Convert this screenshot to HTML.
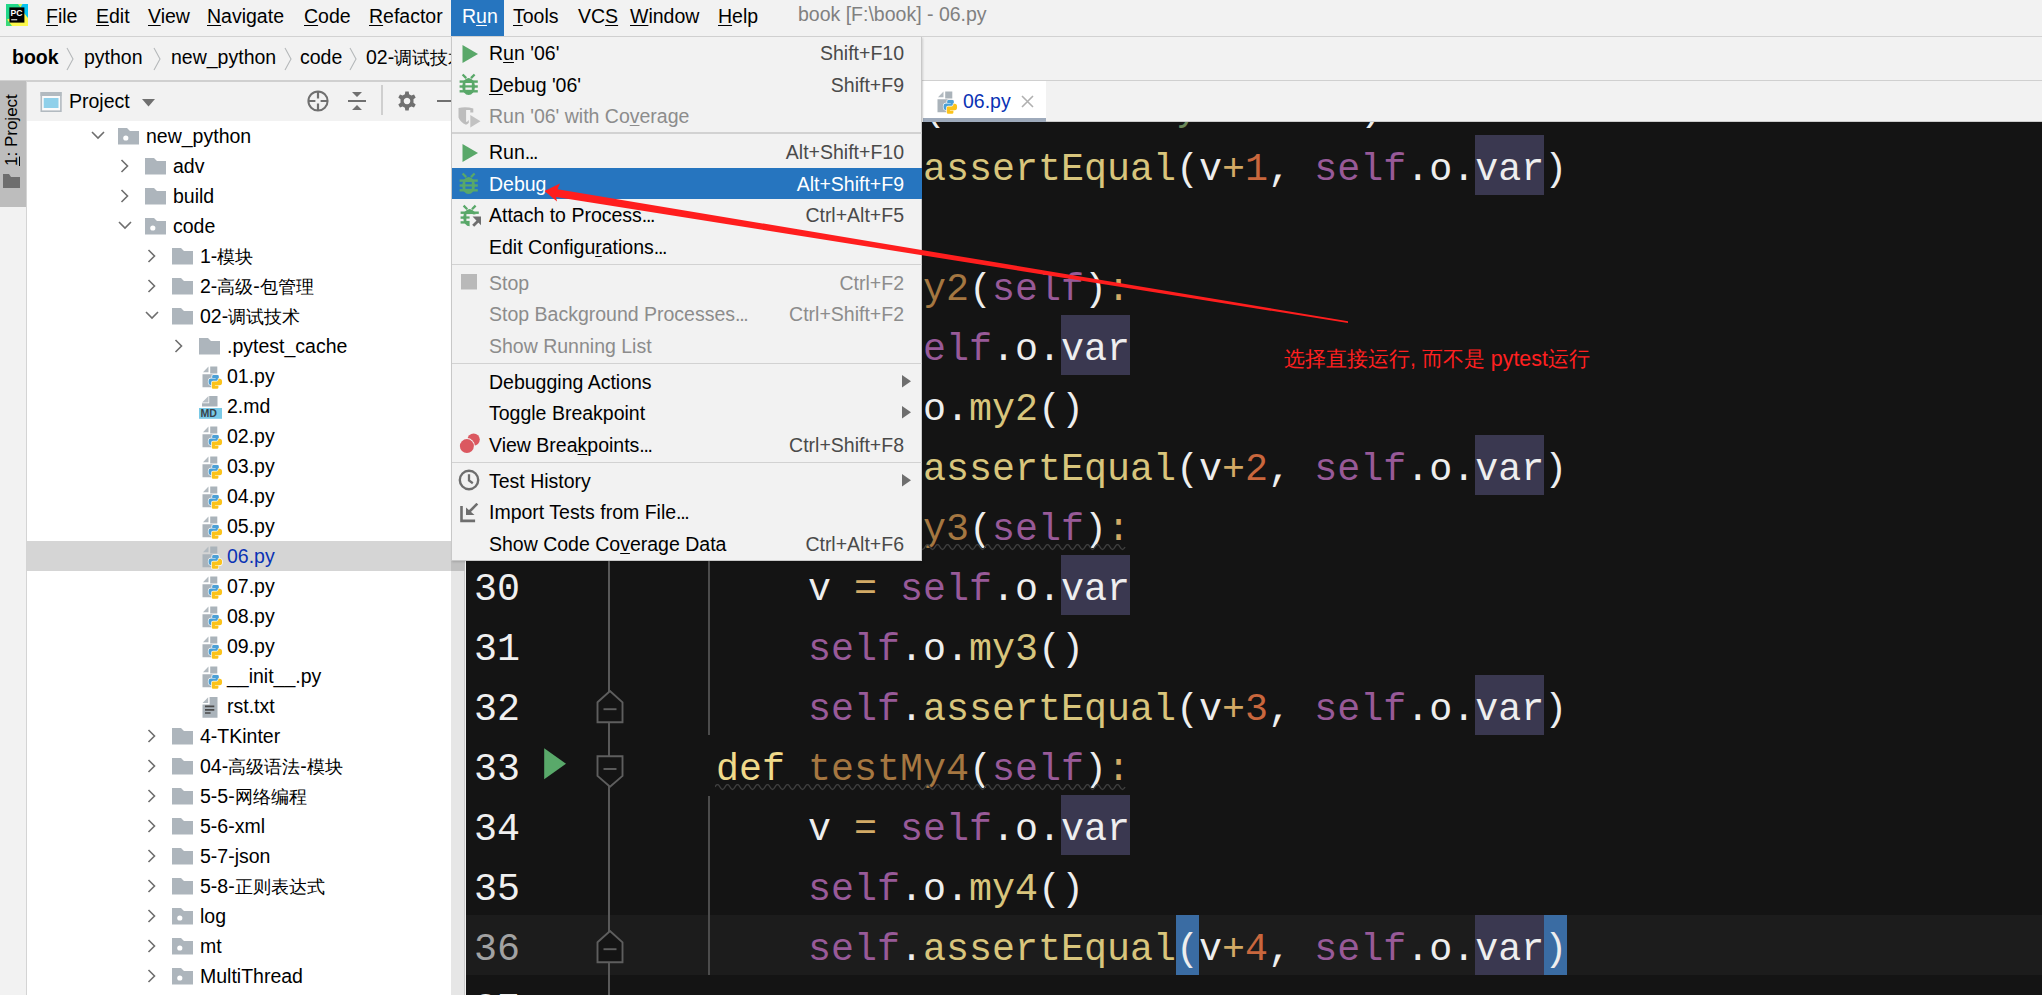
<!DOCTYPE html><html><head><meta charset="utf-8"><style>html,body{margin:0;padding:0}body{width:2042px;height:995px;overflow:hidden;position:relative;background:#f2f2f2}u{text-decoration-thickness:1px;text-underline-offset:1.5px}</style></head><body>
<div style="position:absolute;left:0px;top:0px;width:2042px;height:36px;background:#f2f2f2;"></div>
<div style="position:absolute;left:0px;top:36px;width:2042px;height:1px;background:#d2d2d2;"></div>
<svg style="position:absolute;left:6px;top:4px;" width="22" height="22" viewBox="0 0 22 22"><rect width="22" height="22" fill="#21d789"/><path d="M14,0 H22 V19 L18,13 Z" fill="#07c3f2"/><path d="M12,0 H16.5 L14.5,3.5 Z" fill="#c8f060"/><path d="M0,16 L4,22 H22 V14 L18,9 Z" fill="#fcf84a"/><path d="M0,14 L6,22 H0 Z" fill="#3bd97a"/><rect x="3.4" y="3.4" width="15" height="15.2" fill="#000"/><text x="4.6" y="11.6" font-family="Liberation Sans" font-weight="bold" font-size="8.6" fill="#fff">PC</text><rect x="5.2" y="15" width="6" height="1.4" fill="#bbb"/></svg>
<div style="position:absolute;left:451px;top:0px;width:53px;height:36px;background:#2675bf;"></div>
<div style="position:absolute;left:46px;top:5.85px;font:normal 19.5px 'Liberation Sans', sans-serif;line-height:21.78px;color:#000;white-space:pre;"><u>F</u>ile</div>
<div style="position:absolute;left:96px;top:5.85px;font:normal 19.5px 'Liberation Sans', sans-serif;line-height:21.78px;color:#000;white-space:pre;"><u>E</u>dit</div>
<div style="position:absolute;left:148px;top:5.85px;font:normal 19.5px 'Liberation Sans', sans-serif;line-height:21.78px;color:#000;white-space:pre;"><u>V</u>iew</div>
<div style="position:absolute;left:207px;top:5.85px;font:normal 19.5px 'Liberation Sans', sans-serif;line-height:21.78px;color:#000;white-space:pre;"><u>N</u>avigate</div>
<div style="position:absolute;left:304px;top:5.85px;font:normal 19.5px 'Liberation Sans', sans-serif;line-height:21.78px;color:#000;white-space:pre;"><u>C</u>ode</div>
<div style="position:absolute;left:369px;top:5.85px;font:normal 19.5px 'Liberation Sans', sans-serif;line-height:21.78px;color:#000;white-space:pre;"><u>R</u>efactor</div>
<div style="position:absolute;left:462px;top:5.85px;font:normal 19.5px 'Liberation Sans', sans-serif;line-height:21.78px;color:#fff;white-space:pre;">R<u>u</u>n</div>
<div style="position:absolute;left:513px;top:5.85px;font:normal 19.5px 'Liberation Sans', sans-serif;line-height:21.78px;color:#000;white-space:pre;"><u>T</u>ools</div>
<div style="position:absolute;left:578px;top:5.85px;font:normal 19.5px 'Liberation Sans', sans-serif;line-height:21.78px;color:#000;white-space:pre;">VC<u>S</u></div>
<div style="position:absolute;left:630px;top:5.85px;font:normal 19.5px 'Liberation Sans', sans-serif;line-height:21.78px;color:#000;white-space:pre;"><u>W</u>indow</div>
<div style="position:absolute;left:718px;top:5.85px;font:normal 19.5px 'Liberation Sans', sans-serif;line-height:21.78px;color:#000;white-space:pre;"><u>H</u>elp</div>
<div style="position:absolute;left:798px;top:4.35px;font:normal 19.5px 'Liberation Sans', sans-serif;line-height:21.78px;color:#808080;white-space:pre;">book [F:\book] - 06.py</div>
<div style="position:absolute;left:0px;top:37px;width:2042px;height:43px;background:#f2f2f2;"></div>
<div style="position:absolute;left:0px;top:80px;width:2042px;height:1px;background:#d0d0d0;"></div>
<div style="position:absolute;left:12px;top:47.35px;font:bold 19.5px 'Liberation Sans', sans-serif;line-height:21.78px;color:#000;white-space:pre;">book</div>
<svg style="position:absolute;left:66px;top:47px;" width="8" height="24" viewBox="0 0 8 24"><path d="M1,1 L7,12 L1,23" fill="none" stroke="#b5b8ba" stroke-width="1.1"/></svg>
<svg style="position:absolute;left:153px;top:47px;" width="8" height="24" viewBox="0 0 8 24"><path d="M1,1 L7,12 L1,23" fill="none" stroke="#b5b8ba" stroke-width="1.1"/></svg>
<svg style="position:absolute;left:284px;top:47px;" width="8" height="24" viewBox="0 0 8 24"><path d="M1,1 L7,12 L1,23" fill="none" stroke="#b5b8ba" stroke-width="1.1"/></svg>
<svg style="position:absolute;left:349px;top:47px;" width="8" height="24" viewBox="0 0 8 24"><path d="M1,1 L7,12 L1,23" fill="none" stroke="#b5b8ba" stroke-width="1.1"/></svg>
<div style="position:absolute;left:84px;top:47.35px;font:normal 19.5px 'Liberation Sans', sans-serif;line-height:21.78px;color:#000;white-space:pre;">python</div>
<div style="position:absolute;left:171px;top:47.35px;font:normal 19.5px 'Liberation Sans', sans-serif;line-height:21.78px;color:#000;white-space:pre;">new_python</div>
<div style="position:absolute;left:300px;top:47.35px;font:normal 19.5px 'Liberation Sans', sans-serif;line-height:21.78px;color:#000;white-space:pre;">code</div>
<div style="position:absolute;left:366px;top:47.35px;font:normal 19.5px 'Liberation Sans', sans-serif;line-height:21.78px;color:#000;white-space:pre;">02-<span style="font-size:17.6px">调试技术</span></div>
<div style="position:absolute;left:0px;top:81px;width:26px;height:914px;background:#f2f2f2;"></div>
<div style="position:absolute;left:0px;top:81px;width:26px;height:126px;background:#bdbdbd;"></div>
<div style="position:absolute;left:26px;top:81px;width:1px;height:914px;background:#d4d4d4;"></div>
<div style="position:absolute;left:2px;top:166px;transform:rotate(-90deg);transform-origin:0 0;font:17px 'Liberation Sans', sans-serif;line-height:20px;color:#000;white-space:pre"><u>1</u>: Project</div>
<svg style="position:absolute;left:3px;top:174px;" width="17" height="14" viewBox="0 0 17 14"><path d="M0,0 H6 L8,3 H17 V14 H0 Z" fill="#6e6e6e"/></svg>
<div style="position:absolute;left:27px;top:81px;width:424px;height:40px;background:#f2f2f2;"></div>
<div style="position:absolute;left:27px;top:81px;width:424px;height:1px;background:#d0d0d0;"></div>
<div style="position:absolute;left:27px;top:121px;width:424px;height:874px;background:#ffffff;"></div>
<svg style="position:absolute;left:40px;top:92px;" width="22" height="20" viewBox="0 0 22 20"><rect x="1.3" y="0.8" width="19.6" height="18.4" fill="#fbfbfb" stroke="#b2bac0" stroke-width="1.6"/><rect x="0.5" y="0" width="21" height="4" fill="#b2bac0"/><rect x="3.7" y="6" width="14.8" height="10" fill="#8fd0ea"/></svg>
<div style="position:absolute;left:69px;top:91.35px;font:normal 19.5px 'Liberation Sans', sans-serif;line-height:21.78px;color:#000;white-space:pre;">Project</div>
<svg style="position:absolute;left:142px;top:99px;" width="14" height="8" viewBox="0 0 14 8"><path d="M0,0 H13 L6.5,7.5 Z" fill="#707070"/></svg>
<svg style="position:absolute;left:307px;top:90px;" width="22" height="22" viewBox="0 0 22 22"><circle cx="11" cy="11" r="9.6" fill="none" stroke="#707070" stroke-width="2"/><path d="M11,1.5 V8.4 M11,13.6 V20.5 M1.5,11 H8.4 M13.6,11 H20.5" stroke="#707070" stroke-width="2.2"/></svg>
<svg style="position:absolute;left:348px;top:91px;" width="20" height="20" viewBox="0 0 20 20"><path d="M4,1 H14 L9,6 Z M4,19 H14 L9,14 Z" fill="#707070"/><rect x="0" y="9" width="18" height="2" fill="#707070"/></svg>
<div style="position:absolute;left:381px;top:85px;width:1.5px;height:30px;background:#cfcfcf;"></div>
<svg style="position:absolute;left:397px;top:91px;" width="20" height="20" viewBox="0 0 20 20"><g transform="translate(10,10)"><path fill="#707070" fill-rule="evenodd" d="M-1.7,-9.5 H1.7 L2.1,-6.7 L4.4,-5.4 L7,-6.4 L8.7,-3.5 L6.5,-1.7 V1.7 L8.7,3.5 L7,6.4 L4.4,5.4 L2.1,6.7 L1.7,9.5 H-1.7 L-2.1,6.7 L-4.4,5.4 L-7,6.4 L-8.7,3.5 L-6.5,1.7 V-1.7 L-8.7,-3.5 L-7,-6.4 L-4.4,-5.4 L-2.1,-6.7 Z M0,-3.3 A3.3,3.3 0 1 0 0.01,-3.3 Z"/></g></svg>
<div style="position:absolute;left:437px;top:100px;width:14px;height:2.2px;background:#707070;"></div>
<div style="position:absolute;left:450.5px;top:81px;width:1px;height:914px;background:#d6d6d6;"></div>
<div style="position:absolute;left:27px;top:541px;width:424px;height:30px;background:#d5d5d5;"></div>
<svg style="position:absolute;left:91px;top:131px;" width="15" height="9" viewBox="0 0 15 9"><path d="M1,1 L7,7 L13,1" fill="none" stroke="#6e6e6e" stroke-width="1.6"/></svg>
<svg style="position:absolute;left:118px;top:128px;" width="21" height="17" viewBox="0 0 21 17"><path d="M0,0 H9 L12,3 H21 V16.5 H0 Z" fill="#adb5bc"/><circle cx="7.8" cy="10" r="2.6" fill="#fff"/></svg>
<div style="position:absolute;left:146px;top:126.35px;font:normal 19.5px 'Liberation Sans', sans-serif;line-height:21.78px;color:#000;white-space:pre;">new_python</div>
<svg style="position:absolute;left:120px;top:159px;" width="10" height="15" viewBox="0 0 10 15"><path d="M1.5,1 L7.5,7 L1.5,13" fill="none" stroke="#6e6e6e" stroke-width="1.6"/></svg>
<svg style="position:absolute;left:145px;top:158px;" width="21" height="17" viewBox="0 0 21 17"><path d="M0,0 H9 L12,3 H21 V16.5 H0 Z" fill="#adb5bc"/></svg>
<div style="position:absolute;left:173px;top:156.35px;font:normal 19.5px 'Liberation Sans', sans-serif;line-height:21.78px;color:#000;white-space:pre;">adv</div>
<svg style="position:absolute;left:120px;top:189px;" width="10" height="15" viewBox="0 0 10 15"><path d="M1.5,1 L7.5,7 L1.5,13" fill="none" stroke="#6e6e6e" stroke-width="1.6"/></svg>
<svg style="position:absolute;left:145px;top:188px;" width="21" height="17" viewBox="0 0 21 17"><path d="M0,0 H9 L12,3 H21 V16.5 H0 Z" fill="#adb5bc"/></svg>
<div style="position:absolute;left:173px;top:186.35px;font:normal 19.5px 'Liberation Sans', sans-serif;line-height:21.78px;color:#000;white-space:pre;">build</div>
<svg style="position:absolute;left:118px;top:221px;" width="15" height="9" viewBox="0 0 15 9"><path d="M1,1 L7,7 L13,1" fill="none" stroke="#6e6e6e" stroke-width="1.6"/></svg>
<svg style="position:absolute;left:145px;top:218px;" width="21" height="17" viewBox="0 0 21 17"><path d="M0,0 H9 L12,3 H21 V16.5 H0 Z" fill="#adb5bc"/><circle cx="7.8" cy="10" r="2.6" fill="#fff"/></svg>
<div style="position:absolute;left:173px;top:216.35px;font:normal 19.5px 'Liberation Sans', sans-serif;line-height:21.78px;color:#000;white-space:pre;">code</div>
<svg style="position:absolute;left:147px;top:249px;" width="10" height="15" viewBox="0 0 10 15"><path d="M1.5,1 L7.5,7 L1.5,13" fill="none" stroke="#6e6e6e" stroke-width="1.6"/></svg>
<svg style="position:absolute;left:172px;top:248px;" width="21" height="17" viewBox="0 0 21 17"><path d="M0,0 H9 L12,3 H21 V16.5 H0 Z" fill="#adb5bc"/></svg>
<div style="position:absolute;left:200px;top:246.35px;font:normal 19.5px 'Liberation Sans', sans-serif;line-height:21.78px;color:#000;white-space:pre;">1-<span style="font-size:17.6px">模块</span></div>
<svg style="position:absolute;left:147px;top:279px;" width="10" height="15" viewBox="0 0 10 15"><path d="M1.5,1 L7.5,7 L1.5,13" fill="none" stroke="#6e6e6e" stroke-width="1.6"/></svg>
<svg style="position:absolute;left:172px;top:278px;" width="21" height="17" viewBox="0 0 21 17"><path d="M0,0 H9 L12,3 H21 V16.5 H0 Z" fill="#adb5bc"/></svg>
<div style="position:absolute;left:200px;top:276.35px;font:normal 19.5px 'Liberation Sans', sans-serif;line-height:21.78px;color:#000;white-space:pre;">2-<span style="font-size:17.6px">高级</span>-<span style="font-size:17.6px">包管理</span></div>
<svg style="position:absolute;left:145px;top:311px;" width="15" height="9" viewBox="0 0 15 9"><path d="M1,1 L7,7 L13,1" fill="none" stroke="#6e6e6e" stroke-width="1.6"/></svg>
<svg style="position:absolute;left:172px;top:308px;" width="21" height="17" viewBox="0 0 21 17"><path d="M0,0 H9 L12,3 H21 V16.5 H0 Z" fill="#adb5bc"/></svg>
<div style="position:absolute;left:200px;top:306.35px;font:normal 19.5px 'Liberation Sans', sans-serif;line-height:21.78px;color:#000;white-space:pre;">02-<span style="font-size:17.6px">调试技术</span></div>
<svg style="position:absolute;left:174px;top:339px;" width="10" height="15" viewBox="0 0 10 15"><path d="M1.5,1 L7.5,7 L1.5,13" fill="none" stroke="#6e6e6e" stroke-width="1.6"/></svg>
<svg style="position:absolute;left:199px;top:338px;" width="21" height="17" viewBox="0 0 21 17"><path d="M0,0 H9 L12,3 H21 V16.5 H0 Z" fill="#adb5bc"/></svg>
<div style="position:absolute;left:227px;top:336.35px;font:normal 19.5px 'Liberation Sans', sans-serif;line-height:21.78px;color:#000;white-space:pre;">.pytest_cache</div>
<svg style="position:absolute;left:202px;top:365px;" width="22" height="25" viewBox="0 0 22 25"><path d="M1,7.2 L6.5,1.5 V7.2 Z" fill="#b3bbc1"/><path d="M8.2,1.5 H15.3 V8.6 H8.2 Z M0.5,9.2 H15.3 V22.3 H0.5 Z" fill="#aab3ba"/><g transform="translate(6.5,10)" stroke="#fff" stroke-width="1.3" paint-order="stroke" stroke-linejoin="round"><path d="M3.7,1.2 Q3.7,0 5,0 H9 Q10.3,0 10.3,1.2 V6.1 Q10.3,7.3 9.1,7.3 H5.6 Q3.7,7.3 3.7,9.1 V10 H2.4 Q0,10 0,6.8 Q0,3.5 2.4,3.5 H7.2 V3 H3.7 Z" fill="#4a9fd5"/><path transform="rotate(180 6.8 6.9)" d="M3.7,1.2 Q3.7,0 5,0 H9 Q10.3,0 10.3,1.2 V6.1 Q10.3,7.3 9.1,7.3 H5.6 Q3.7,7.3 3.7,9.1 V10 H2.4 Q0,10 0,6.8 Q0,3.5 2.4,3.5 H7.2 V3 H3.7 Z" fill="#fbc31b"/></g></svg>
<div style="position:absolute;left:227px;top:366.35px;font:normal 19.5px 'Liberation Sans', sans-serif;line-height:21.78px;color:#000;white-space:pre;">01.py</div>
<svg style="position:absolute;left:199px;top:396px;" width="23" height="24" viewBox="0 0 23 24"><path d="M3,6.5 L9.5,0 V6.5 Z" fill="#b9c0c6"/><path d="M10.2,0 H18.5 V10.5 H3 V7.2 H10.2 Z" fill="#a9b2b9"/><rect x="0" y="12" width="23" height="10.8" fill="#79c9e6"/><text x="1.5" y="21.4" font-family="Liberation Sans" font-weight="bold" font-size="10.6" fill="#35424a">MD</text></svg>
<div style="position:absolute;left:227px;top:396.35px;font:normal 19.5px 'Liberation Sans', sans-serif;line-height:21.78px;color:#000;white-space:pre;">2.md</div>
<svg style="position:absolute;left:202px;top:425px;" width="22" height="25" viewBox="0 0 22 25"><path d="M1,7.2 L6.5,1.5 V7.2 Z" fill="#b3bbc1"/><path d="M8.2,1.5 H15.3 V8.6 H8.2 Z M0.5,9.2 H15.3 V22.3 H0.5 Z" fill="#aab3ba"/><g transform="translate(6.5,10)" stroke="#fff" stroke-width="1.3" paint-order="stroke" stroke-linejoin="round"><path d="M3.7,1.2 Q3.7,0 5,0 H9 Q10.3,0 10.3,1.2 V6.1 Q10.3,7.3 9.1,7.3 H5.6 Q3.7,7.3 3.7,9.1 V10 H2.4 Q0,10 0,6.8 Q0,3.5 2.4,3.5 H7.2 V3 H3.7 Z" fill="#4a9fd5"/><path transform="rotate(180 6.8 6.9)" d="M3.7,1.2 Q3.7,0 5,0 H9 Q10.3,0 10.3,1.2 V6.1 Q10.3,7.3 9.1,7.3 H5.6 Q3.7,7.3 3.7,9.1 V10 H2.4 Q0,10 0,6.8 Q0,3.5 2.4,3.5 H7.2 V3 H3.7 Z" fill="#fbc31b"/></g></svg>
<div style="position:absolute;left:227px;top:426.35px;font:normal 19.5px 'Liberation Sans', sans-serif;line-height:21.78px;color:#000;white-space:pre;">02.py</div>
<svg style="position:absolute;left:202px;top:455px;" width="22" height="25" viewBox="0 0 22 25"><path d="M1,7.2 L6.5,1.5 V7.2 Z" fill="#b3bbc1"/><path d="M8.2,1.5 H15.3 V8.6 H8.2 Z M0.5,9.2 H15.3 V22.3 H0.5 Z" fill="#aab3ba"/><g transform="translate(6.5,10)" stroke="#fff" stroke-width="1.3" paint-order="stroke" stroke-linejoin="round"><path d="M3.7,1.2 Q3.7,0 5,0 H9 Q10.3,0 10.3,1.2 V6.1 Q10.3,7.3 9.1,7.3 H5.6 Q3.7,7.3 3.7,9.1 V10 H2.4 Q0,10 0,6.8 Q0,3.5 2.4,3.5 H7.2 V3 H3.7 Z" fill="#4a9fd5"/><path transform="rotate(180 6.8 6.9)" d="M3.7,1.2 Q3.7,0 5,0 H9 Q10.3,0 10.3,1.2 V6.1 Q10.3,7.3 9.1,7.3 H5.6 Q3.7,7.3 3.7,9.1 V10 H2.4 Q0,10 0,6.8 Q0,3.5 2.4,3.5 H7.2 V3 H3.7 Z" fill="#fbc31b"/></g></svg>
<div style="position:absolute;left:227px;top:456.35px;font:normal 19.5px 'Liberation Sans', sans-serif;line-height:21.78px;color:#000;white-space:pre;">03.py</div>
<svg style="position:absolute;left:202px;top:485px;" width="22" height="25" viewBox="0 0 22 25"><path d="M1,7.2 L6.5,1.5 V7.2 Z" fill="#b3bbc1"/><path d="M8.2,1.5 H15.3 V8.6 H8.2 Z M0.5,9.2 H15.3 V22.3 H0.5 Z" fill="#aab3ba"/><g transform="translate(6.5,10)" stroke="#fff" stroke-width="1.3" paint-order="stroke" stroke-linejoin="round"><path d="M3.7,1.2 Q3.7,0 5,0 H9 Q10.3,0 10.3,1.2 V6.1 Q10.3,7.3 9.1,7.3 H5.6 Q3.7,7.3 3.7,9.1 V10 H2.4 Q0,10 0,6.8 Q0,3.5 2.4,3.5 H7.2 V3 H3.7 Z" fill="#4a9fd5"/><path transform="rotate(180 6.8 6.9)" d="M3.7,1.2 Q3.7,0 5,0 H9 Q10.3,0 10.3,1.2 V6.1 Q10.3,7.3 9.1,7.3 H5.6 Q3.7,7.3 3.7,9.1 V10 H2.4 Q0,10 0,6.8 Q0,3.5 2.4,3.5 H7.2 V3 H3.7 Z" fill="#fbc31b"/></g></svg>
<div style="position:absolute;left:227px;top:486.35px;font:normal 19.5px 'Liberation Sans', sans-serif;line-height:21.78px;color:#000;white-space:pre;">04.py</div>
<svg style="position:absolute;left:202px;top:515px;" width="22" height="25" viewBox="0 0 22 25"><path d="M1,7.2 L6.5,1.5 V7.2 Z" fill="#b3bbc1"/><path d="M8.2,1.5 H15.3 V8.6 H8.2 Z M0.5,9.2 H15.3 V22.3 H0.5 Z" fill="#aab3ba"/><g transform="translate(6.5,10)" stroke="#fff" stroke-width="1.3" paint-order="stroke" stroke-linejoin="round"><path d="M3.7,1.2 Q3.7,0 5,0 H9 Q10.3,0 10.3,1.2 V6.1 Q10.3,7.3 9.1,7.3 H5.6 Q3.7,7.3 3.7,9.1 V10 H2.4 Q0,10 0,6.8 Q0,3.5 2.4,3.5 H7.2 V3 H3.7 Z" fill="#4a9fd5"/><path transform="rotate(180 6.8 6.9)" d="M3.7,1.2 Q3.7,0 5,0 H9 Q10.3,0 10.3,1.2 V6.1 Q10.3,7.3 9.1,7.3 H5.6 Q3.7,7.3 3.7,9.1 V10 H2.4 Q0,10 0,6.8 Q0,3.5 2.4,3.5 H7.2 V3 H3.7 Z" fill="#fbc31b"/></g></svg>
<div style="position:absolute;left:227px;top:516.35px;font:normal 19.5px 'Liberation Sans', sans-serif;line-height:21.78px;color:#000;white-space:pre;">05.py</div>
<svg style="position:absolute;left:202px;top:545px;" width="22" height="25" viewBox="0 0 22 25"><path d="M1,7.2 L6.5,1.5 V7.2 Z" fill="#b3bbc1"/><path d="M8.2,1.5 H15.3 V8.6 H8.2 Z M0.5,9.2 H15.3 V22.3 H0.5 Z" fill="#aab3ba"/><g transform="translate(6.5,10)" stroke="#fff" stroke-width="1.3" paint-order="stroke" stroke-linejoin="round"><path d="M3.7,1.2 Q3.7,0 5,0 H9 Q10.3,0 10.3,1.2 V6.1 Q10.3,7.3 9.1,7.3 H5.6 Q3.7,7.3 3.7,9.1 V10 H2.4 Q0,10 0,6.8 Q0,3.5 2.4,3.5 H7.2 V3 H3.7 Z" fill="#4a9fd5"/><path transform="rotate(180 6.8 6.9)" d="M3.7,1.2 Q3.7,0 5,0 H9 Q10.3,0 10.3,1.2 V6.1 Q10.3,7.3 9.1,7.3 H5.6 Q3.7,7.3 3.7,9.1 V10 H2.4 Q0,10 0,6.8 Q0,3.5 2.4,3.5 H7.2 V3 H3.7 Z" fill="#fbc31b"/></g></svg>
<div style="position:absolute;left:227px;top:546.35px;font:normal 19.5px 'Liberation Sans', sans-serif;line-height:21.78px;color:#0a32b4;white-space:pre;">06.py</div>
<svg style="position:absolute;left:202px;top:575px;" width="22" height="25" viewBox="0 0 22 25"><path d="M1,7.2 L6.5,1.5 V7.2 Z" fill="#b3bbc1"/><path d="M8.2,1.5 H15.3 V8.6 H8.2 Z M0.5,9.2 H15.3 V22.3 H0.5 Z" fill="#aab3ba"/><g transform="translate(6.5,10)" stroke="#fff" stroke-width="1.3" paint-order="stroke" stroke-linejoin="round"><path d="M3.7,1.2 Q3.7,0 5,0 H9 Q10.3,0 10.3,1.2 V6.1 Q10.3,7.3 9.1,7.3 H5.6 Q3.7,7.3 3.7,9.1 V10 H2.4 Q0,10 0,6.8 Q0,3.5 2.4,3.5 H7.2 V3 H3.7 Z" fill="#4a9fd5"/><path transform="rotate(180 6.8 6.9)" d="M3.7,1.2 Q3.7,0 5,0 H9 Q10.3,0 10.3,1.2 V6.1 Q10.3,7.3 9.1,7.3 H5.6 Q3.7,7.3 3.7,9.1 V10 H2.4 Q0,10 0,6.8 Q0,3.5 2.4,3.5 H7.2 V3 H3.7 Z" fill="#fbc31b"/></g></svg>
<div style="position:absolute;left:227px;top:576.35px;font:normal 19.5px 'Liberation Sans', sans-serif;line-height:21.78px;color:#000;white-space:pre;">07.py</div>
<svg style="position:absolute;left:202px;top:605px;" width="22" height="25" viewBox="0 0 22 25"><path d="M1,7.2 L6.5,1.5 V7.2 Z" fill="#b3bbc1"/><path d="M8.2,1.5 H15.3 V8.6 H8.2 Z M0.5,9.2 H15.3 V22.3 H0.5 Z" fill="#aab3ba"/><g transform="translate(6.5,10)" stroke="#fff" stroke-width="1.3" paint-order="stroke" stroke-linejoin="round"><path d="M3.7,1.2 Q3.7,0 5,0 H9 Q10.3,0 10.3,1.2 V6.1 Q10.3,7.3 9.1,7.3 H5.6 Q3.7,7.3 3.7,9.1 V10 H2.4 Q0,10 0,6.8 Q0,3.5 2.4,3.5 H7.2 V3 H3.7 Z" fill="#4a9fd5"/><path transform="rotate(180 6.8 6.9)" d="M3.7,1.2 Q3.7,0 5,0 H9 Q10.3,0 10.3,1.2 V6.1 Q10.3,7.3 9.1,7.3 H5.6 Q3.7,7.3 3.7,9.1 V10 H2.4 Q0,10 0,6.8 Q0,3.5 2.4,3.5 H7.2 V3 H3.7 Z" fill="#fbc31b"/></g></svg>
<div style="position:absolute;left:227px;top:606.35px;font:normal 19.5px 'Liberation Sans', sans-serif;line-height:21.78px;color:#000;white-space:pre;">08.py</div>
<svg style="position:absolute;left:202px;top:635px;" width="22" height="25" viewBox="0 0 22 25"><path d="M1,7.2 L6.5,1.5 V7.2 Z" fill="#b3bbc1"/><path d="M8.2,1.5 H15.3 V8.6 H8.2 Z M0.5,9.2 H15.3 V22.3 H0.5 Z" fill="#aab3ba"/><g transform="translate(6.5,10)" stroke="#fff" stroke-width="1.3" paint-order="stroke" stroke-linejoin="round"><path d="M3.7,1.2 Q3.7,0 5,0 H9 Q10.3,0 10.3,1.2 V6.1 Q10.3,7.3 9.1,7.3 H5.6 Q3.7,7.3 3.7,9.1 V10 H2.4 Q0,10 0,6.8 Q0,3.5 2.4,3.5 H7.2 V3 H3.7 Z" fill="#4a9fd5"/><path transform="rotate(180 6.8 6.9)" d="M3.7,1.2 Q3.7,0 5,0 H9 Q10.3,0 10.3,1.2 V6.1 Q10.3,7.3 9.1,7.3 H5.6 Q3.7,7.3 3.7,9.1 V10 H2.4 Q0,10 0,6.8 Q0,3.5 2.4,3.5 H7.2 V3 H3.7 Z" fill="#fbc31b"/></g></svg>
<div style="position:absolute;left:227px;top:636.35px;font:normal 19.5px 'Liberation Sans', sans-serif;line-height:21.78px;color:#000;white-space:pre;">09.py</div>
<svg style="position:absolute;left:202px;top:665px;" width="22" height="25" viewBox="0 0 22 25"><path d="M1,7.2 L6.5,1.5 V7.2 Z" fill="#b3bbc1"/><path d="M8.2,1.5 H15.3 V8.6 H8.2 Z M0.5,9.2 H15.3 V22.3 H0.5 Z" fill="#aab3ba"/><g transform="translate(6.5,10)" stroke="#fff" stroke-width="1.3" paint-order="stroke" stroke-linejoin="round"><path d="M3.7,1.2 Q3.7,0 5,0 H9 Q10.3,0 10.3,1.2 V6.1 Q10.3,7.3 9.1,7.3 H5.6 Q3.7,7.3 3.7,9.1 V10 H2.4 Q0,10 0,6.8 Q0,3.5 2.4,3.5 H7.2 V3 H3.7 Z" fill="#4a9fd5"/><path transform="rotate(180 6.8 6.9)" d="M3.7,1.2 Q3.7,0 5,0 H9 Q10.3,0 10.3,1.2 V6.1 Q10.3,7.3 9.1,7.3 H5.6 Q3.7,7.3 3.7,9.1 V10 H2.4 Q0,10 0,6.8 Q0,3.5 2.4,3.5 H7.2 V3 H3.7 Z" fill="#fbc31b"/></g></svg>
<div style="position:absolute;left:227px;top:666.35px;font:normal 19.5px 'Liberation Sans', sans-serif;line-height:21.78px;color:#000;white-space:pre;">__init__.py</div>
<svg style="position:absolute;left:202px;top:696.5px;" width="16" height="22" viewBox="0 0 16 22"><path d="M0.5,6 L6.2,0.3 V6 Z" fill="#b3bbc1"/><path d="M7.6,0 H15.5 V20.8 H0.5 V7.4 H7.6 Z" fill="#aab3ba"/><path d="M3,9.3 H12.3 M3,12.8 H12.3 M3,16 H8.6" stroke="#4a4a4a" stroke-width="1.7"/></svg>
<div style="position:absolute;left:227px;top:696.35px;font:normal 19.5px 'Liberation Sans', sans-serif;line-height:21.78px;color:#000;white-space:pre;">rst.txt</div>
<svg style="position:absolute;left:147px;top:729px;" width="10" height="15" viewBox="0 0 10 15"><path d="M1.5,1 L7.5,7 L1.5,13" fill="none" stroke="#6e6e6e" stroke-width="1.6"/></svg>
<svg style="position:absolute;left:172px;top:728px;" width="21" height="17" viewBox="0 0 21 17"><path d="M0,0 H9 L12,3 H21 V16.5 H0 Z" fill="#adb5bc"/></svg>
<div style="position:absolute;left:200px;top:726.35px;font:normal 19.5px 'Liberation Sans', sans-serif;line-height:21.78px;color:#000;white-space:pre;">4-TKinter</div>
<svg style="position:absolute;left:147px;top:759px;" width="10" height="15" viewBox="0 0 10 15"><path d="M1.5,1 L7.5,7 L1.5,13" fill="none" stroke="#6e6e6e" stroke-width="1.6"/></svg>
<svg style="position:absolute;left:172px;top:758px;" width="21" height="17" viewBox="0 0 21 17"><path d="M0,0 H9 L12,3 H21 V16.5 H0 Z" fill="#adb5bc"/></svg>
<div style="position:absolute;left:200px;top:756.35px;font:normal 19.5px 'Liberation Sans', sans-serif;line-height:21.78px;color:#000;white-space:pre;">04-<span style="font-size:17.6px">高级语法</span>-<span style="font-size:17.6px">模块</span></div>
<svg style="position:absolute;left:147px;top:789px;" width="10" height="15" viewBox="0 0 10 15"><path d="M1.5,1 L7.5,7 L1.5,13" fill="none" stroke="#6e6e6e" stroke-width="1.6"/></svg>
<svg style="position:absolute;left:172px;top:788px;" width="21" height="17" viewBox="0 0 21 17"><path d="M0,0 H9 L12,3 H21 V16.5 H0 Z" fill="#adb5bc"/></svg>
<div style="position:absolute;left:200px;top:786.35px;font:normal 19.5px 'Liberation Sans', sans-serif;line-height:21.78px;color:#000;white-space:pre;">5-5-<span style="font-size:17.6px">网络编程</span></div>
<svg style="position:absolute;left:147px;top:819px;" width="10" height="15" viewBox="0 0 10 15"><path d="M1.5,1 L7.5,7 L1.5,13" fill="none" stroke="#6e6e6e" stroke-width="1.6"/></svg>
<svg style="position:absolute;left:172px;top:818px;" width="21" height="17" viewBox="0 0 21 17"><path d="M0,0 H9 L12,3 H21 V16.5 H0 Z" fill="#adb5bc"/></svg>
<div style="position:absolute;left:200px;top:816.35px;font:normal 19.5px 'Liberation Sans', sans-serif;line-height:21.78px;color:#000;white-space:pre;">5-6-xml</div>
<svg style="position:absolute;left:147px;top:849px;" width="10" height="15" viewBox="0 0 10 15"><path d="M1.5,1 L7.5,7 L1.5,13" fill="none" stroke="#6e6e6e" stroke-width="1.6"/></svg>
<svg style="position:absolute;left:172px;top:848px;" width="21" height="17" viewBox="0 0 21 17"><path d="M0,0 H9 L12,3 H21 V16.5 H0 Z" fill="#adb5bc"/></svg>
<div style="position:absolute;left:200px;top:846.35px;font:normal 19.5px 'Liberation Sans', sans-serif;line-height:21.78px;color:#000;white-space:pre;">5-7-json</div>
<svg style="position:absolute;left:147px;top:879px;" width="10" height="15" viewBox="0 0 10 15"><path d="M1.5,1 L7.5,7 L1.5,13" fill="none" stroke="#6e6e6e" stroke-width="1.6"/></svg>
<svg style="position:absolute;left:172px;top:878px;" width="21" height="17" viewBox="0 0 21 17"><path d="M0,0 H9 L12,3 H21 V16.5 H0 Z" fill="#adb5bc"/></svg>
<div style="position:absolute;left:200px;top:876.35px;font:normal 19.5px 'Liberation Sans', sans-serif;line-height:21.78px;color:#000;white-space:pre;">5-8-<span style="font-size:17.6px">正则表达式</span></div>
<svg style="position:absolute;left:147px;top:909px;" width="10" height="15" viewBox="0 0 10 15"><path d="M1.5,1 L7.5,7 L1.5,13" fill="none" stroke="#6e6e6e" stroke-width="1.6"/></svg>
<svg style="position:absolute;left:172px;top:908px;" width="21" height="17" viewBox="0 0 21 17"><path d="M0,0 H9 L12,3 H21 V16.5 H0 Z" fill="#adb5bc"/><circle cx="7.8" cy="10" r="2.6" fill="#fff"/></svg>
<div style="position:absolute;left:200px;top:906.35px;font:normal 19.5px 'Liberation Sans', sans-serif;line-height:21.78px;color:#000;white-space:pre;">log</div>
<svg style="position:absolute;left:147px;top:939px;" width="10" height="15" viewBox="0 0 10 15"><path d="M1.5,1 L7.5,7 L1.5,13" fill="none" stroke="#6e6e6e" stroke-width="1.6"/></svg>
<svg style="position:absolute;left:172px;top:938px;" width="21" height="17" viewBox="0 0 21 17"><path d="M0,0 H9 L12,3 H21 V16.5 H0 Z" fill="#adb5bc"/><circle cx="7.8" cy="10" r="2.6" fill="#fff"/></svg>
<div style="position:absolute;left:200px;top:936.35px;font:normal 19.5px 'Liberation Sans', sans-serif;line-height:21.78px;color:#000;white-space:pre;">mt</div>
<svg style="position:absolute;left:147px;top:969px;" width="10" height="15" viewBox="0 0 10 15"><path d="M1.5,1 L7.5,7 L1.5,13" fill="none" stroke="#6e6e6e" stroke-width="1.6"/></svg>
<svg style="position:absolute;left:172px;top:968px;" width="21" height="17" viewBox="0 0 21 17"><path d="M0,0 H9 L12,3 H21 V16.5 H0 Z" fill="#adb5bc"/><circle cx="7.8" cy="10" r="2.6" fill="#fff"/></svg>
<div style="position:absolute;left:200px;top:966.35px;font:normal 19.5px 'Liberation Sans', sans-serif;line-height:21.78px;color:#000;white-space:pre;">MultiThread</div>
<div style="position:absolute;left:451px;top:81px;width:13px;height:914px;background:#e6e6e6;"></div>
<div style="position:absolute;left:464px;top:81px;width:1px;height:914px;background:#c9c9c9;"></div>
<div style="position:absolute;left:465px;top:81px;width:1px;height:914px;background:#f2f2f2;"></div>
<div style="position:absolute;left:451px;top:541px;width:13.5px;height:30px;background:#c0c0c0;"></div>
<div style="position:absolute;left:466px;top:81px;width:1576px;height:41px;background:#f2f2f2;"></div>
<div style="position:absolute;left:923px;top:81px;width:123px;height:37px;background:#ffffff;"></div>
<div style="position:absolute;left:923px;top:117.5px;width:123px;height:4px;background:#9eaabb;"></div>
<svg style="position:absolute;left:937px;top:90px;" width="22" height="25" viewBox="0 0 22 25"><path d="M1,7.2 L6.5,1.5 V7.2 Z" fill="#b3bbc1"/><path d="M8.2,1.5 H15.3 V8.6 H8.2 Z M0.5,9.2 H15.3 V22.3 H0.5 Z" fill="#aab3ba"/><g transform="translate(6.5,10)" stroke="#fff" stroke-width="1.3" paint-order="stroke" stroke-linejoin="round"><path d="M3.7,1.2 Q3.7,0 5,0 H9 Q10.3,0 10.3,1.2 V6.1 Q10.3,7.3 9.1,7.3 H5.6 Q3.7,7.3 3.7,9.1 V10 H2.4 Q0,10 0,6.8 Q0,3.5 2.4,3.5 H7.2 V3 H3.7 Z" fill="#4a9fd5"/><path transform="rotate(180 6.8 6.9)" d="M3.7,1.2 Q3.7,0 5,0 H9 Q10.3,0 10.3,1.2 V6.1 Q10.3,7.3 9.1,7.3 H5.6 Q3.7,7.3 3.7,9.1 V10 H2.4 Q0,10 0,6.8 Q0,3.5 2.4,3.5 H7.2 V3 H3.7 Z" fill="#fbc31b"/></g></svg>
<div style="position:absolute;left:963px;top:91.35px;font:normal 19.5px 'Liberation Sans', sans-serif;line-height:21.78px;color:#0a32b4;white-space:pre;">06.py</div>
<svg style="position:absolute;left:1021px;top:94.5px;" width="13" height="13" viewBox="0 0 13 13"><path d="M1,1 L12,12 M12,1 L1,12" stroke="#b0b0b0" stroke-width="1.6"/></svg>
<div style="position:absolute;left:466px;top:122px;width:1576px;height:873px;background:#141414;"></div>
<div style="position:absolute;left:466px;top:915px;width:1576px;height:60px;background:#1c1c1c;"></div>
<div style="position:absolute;left:624px;top:88.57px;font:38.33px 'Liberation Mono', monospace;line-height:43.43px;white-space:pre"><span style="color:#eeeeee">        print</span><span style="color:#eeeeee">(</span><span style="color:#6a8759">"test of my cases"</span><span style="color:#eeeeee">)</span></div>
<div style="position:absolute;left:466px;top:81px;width:1576px;height:41px;background:#f2f2f2;"></div>
<div style="position:absolute;left:923px;top:81px;width:123px;height:37px;background:#ffffff;"></div>
<div style="position:absolute;left:923px;top:117.5px;width:123px;height:4px;background:#9eaabb;"></div>
<svg style="position:absolute;left:937px;top:90px;" width="22" height="25" viewBox="0 0 22 25"><path d="M1,7.2 L6.5,1.5 V7.2 Z" fill="#b3bbc1"/><path d="M8.2,1.5 H15.3 V8.6 H8.2 Z M0.5,9.2 H15.3 V22.3 H0.5 Z" fill="#aab3ba"/><g transform="translate(6.5,10)" stroke="#fff" stroke-width="1.3" paint-order="stroke" stroke-linejoin="round"><path d="M3.7,1.2 Q3.7,0 5,0 H9 Q10.3,0 10.3,1.2 V6.1 Q10.3,7.3 9.1,7.3 H5.6 Q3.7,7.3 3.7,9.1 V10 H2.4 Q0,10 0,6.8 Q0,3.5 2.4,3.5 H7.2 V3 H3.7 Z" fill="#4a9fd5"/><path transform="rotate(180 6.8 6.9)" d="M3.7,1.2 Q3.7,0 5,0 H9 Q10.3,0 10.3,1.2 V6.1 Q10.3,7.3 9.1,7.3 H5.6 Q3.7,7.3 3.7,9.1 V10 H2.4 Q0,10 0,6.8 Q0,3.5 2.4,3.5 H7.2 V3 H3.7 Z" fill="#fbc31b"/></g></svg>
<div style="position:absolute;left:963px;top:91.35px;font:normal 19.5px 'Liberation Sans', sans-serif;line-height:21.78px;color:#0a32b4;white-space:pre;">06.py</div>
<svg style="position:absolute;left:1021px;top:94.5px;" width="13" height="13" viewBox="0 0 13 13"><path d="M1,1 L12,12 M12,1 L1,12" stroke="#b0b0b0" stroke-width="1.6"/></svg>
<div style="position:absolute;left:1046px;top:120.5px;width:996px;height:1.2px;background:#cccccc;"></div>
<div style="position:absolute;left:1475.0px;top:135px;width:69.0px;height:60px;background:#3a3850;"></div>
<div style="position:absolute;left:624px;top:148.57px;font:38.33px 'Liberation Mono', monospace;line-height:43.43px;white-space:pre"><span style="color:#eeeeee">        </span><span style="color:#985a98">self</span><span style="color:#eeeeee">.</span><span style="color:#d8c57c">assertEqual</span><span style="color:#eeeeee">(v</span><span style="color:#d2aa66">+</span><span style="color:#c9673d">1</span><span style="color:#eeeeee">, </span><span style="color:#985a98">self</span><span style="color:#eeeeee">.o.var)</span></div>
<div style="position:absolute;left:624px;top:268.57px;font:38.33px 'Liberation Mono', monospace;line-height:43.43px;white-space:pre"><span style="color:#eeeeee">    </span><span style="color:#f0da8a">def </span><span style="color:#a57741">testMy2</span><span style="color:#eeeeee">(</span><span style="color:#985a98">self</span><span style="color:#eeeeee">)</span><span style="color:#d2aa66">:</span></div>
<div style="position:absolute;left:1061.0px;top:315px;width:69.0px;height:60px;background:#3a3850;"></div>
<div style="position:absolute;left:624px;top:328.57px;font:38.33px 'Liberation Mono', monospace;line-height:43.43px;white-space:pre"><span style="color:#eeeeee">        v </span><span style="color:#d2aa66">=</span><span style="color:#eeeeee"> </span><span style="color:#985a98">self</span><span style="color:#eeeeee">.o.var</span></div>
<div style="position:absolute;left:624px;top:388.57px;font:38.33px 'Liberation Mono', monospace;line-height:43.43px;white-space:pre"><span style="color:#eeeeee">        </span><span style="color:#985a98">self</span><span style="color:#eeeeee">.o.</span><span style="color:#d8c57c">my2</span><span style="color:#eeeeee">()</span></div>
<div style="position:absolute;left:1475.0px;top:435px;width:69.0px;height:60px;background:#3a3850;"></div>
<div style="position:absolute;left:624px;top:448.57px;font:38.33px 'Liberation Mono', monospace;line-height:43.43px;white-space:pre"><span style="color:#eeeeee">        </span><span style="color:#985a98">self</span><span style="color:#eeeeee">.</span><span style="color:#d8c57c">assertEqual</span><span style="color:#eeeeee">(v</span><span style="color:#d2aa66">+</span><span style="color:#c9673d">2</span><span style="color:#eeeeee">, </span><span style="color:#985a98">self</span><span style="color:#eeeeee">.o.var)</span></div>
<div style="position:absolute;left:624px;top:508.57px;font:38.33px 'Liberation Mono', monospace;line-height:43.43px;white-space:pre"><span style="color:#eeeeee">    </span><span style="color:#f0da8a">def </span><span style="color:#a57741">testMy3</span><span style="color:#eeeeee">(</span><span style="color:#985a98">self</span><span style="color:#eeeeee">)</span><span style="color:#d2aa66">:</span></div>
<svg style="position:absolute;left:715.0px;top:544px;" width="414" height="7" viewBox="0 0 414 7"><path d="M0,3 Q2.5,-1.8 5,3 Q7.5,7.8 10,3 Q12.5,-1.8 15,3 Q17.5,7.8 20,3 Q22.5,-1.8 25,3 Q27.5,7.8 30,3 Q32.5,-1.8 35,3 Q37.5,7.8 40,3 Q42.5,-1.8 45,3 Q47.5,7.8 50,3 Q52.5,-1.8 55,3 Q57.5,7.8 60,3 Q62.5,-1.8 65,3 Q67.5,7.8 70,3 Q72.5,-1.8 75,3 Q77.5,7.8 80,3 Q82.5,-1.8 85,3 Q87.5,7.8 90,3 Q92.5,-1.8 95,3 Q97.5,7.8 100,3 Q102.5,-1.8 105,3 Q107.5,7.8 110,3 Q112.5,-1.8 115,3 Q117.5,7.8 120,3 Q122.5,-1.8 125,3 Q127.5,7.8 130,3 Q132.5,-1.8 135,3 Q137.5,7.8 140,3 Q142.5,-1.8 145,3 Q147.5,7.8 150,3 Q152.5,-1.8 155,3 Q157.5,7.8 160,3 Q162.5,-1.8 165,3 Q167.5,7.8 170,3 Q172.5,-1.8 175,3 Q177.5,7.8 180,3 Q182.5,-1.8 185,3 Q187.5,7.8 190,3 Q192.5,-1.8 195,3 Q197.5,7.8 200,3 Q202.5,-1.8 205,3 Q207.5,7.8 210,3 Q212.5,-1.8 215,3 Q217.5,7.8 220,3 Q222.5,-1.8 225,3 Q227.5,7.8 230,3 Q232.5,-1.8 235,3 Q237.5,7.8 240,3 Q242.5,-1.8 245,3 Q247.5,7.8 250,3 Q252.5,-1.8 255,3 Q257.5,7.8 260,3 Q262.5,-1.8 265,3 Q267.5,7.8 270,3 Q272.5,-1.8 275,3 Q277.5,7.8 280,3 Q282.5,-1.8 285,3 Q287.5,7.8 290,3 Q292.5,-1.8 295,3 Q297.5,7.8 300,3 Q302.5,-1.8 305,3 Q307.5,7.8 310,3 Q312.5,-1.8 315,3 Q317.5,7.8 320,3 Q322.5,-1.8 325,3 Q327.5,7.8 330,3 Q332.5,-1.8 335,3 Q337.5,7.8 340,3 Q342.5,-1.8 345,3 Q347.5,7.8 350,3 Q352.5,-1.8 355,3 Q357.5,7.8 360,3 Q362.5,-1.8 365,3 Q367.5,7.8 370,3 Q372.5,-1.8 375,3 Q377.5,7.8 380,3 Q382.5,-1.8 385,3 Q387.5,7.8 390,3 Q392.5,-1.8 395,3 Q397.5,7.8 400,3 Q402.5,-1.8 405,3 Q407.5,7.8 410,3" fill="none" stroke="#3e3e3e" stroke-width="1.5"/></svg>
<div style="position:absolute;left:1061.0px;top:555px;width:69.0px;height:60px;background:#3a3850;"></div>
<div style="position:absolute;left:624px;top:568.57px;font:38.33px 'Liberation Mono', monospace;line-height:43.43px;white-space:pre"><span style="color:#eeeeee">        v </span><span style="color:#d2aa66">=</span><span style="color:#eeeeee"> </span><span style="color:#985a98">self</span><span style="color:#eeeeee">.o.var</span></div>
<div style="position:absolute;left:624px;top:628.57px;font:38.33px 'Liberation Mono', monospace;line-height:43.43px;white-space:pre"><span style="color:#eeeeee">        </span><span style="color:#985a98">self</span><span style="color:#eeeeee">.o.</span><span style="color:#d8c57c">my3</span><span style="color:#eeeeee">()</span></div>
<div style="position:absolute;left:1475.0px;top:675px;width:69.0px;height:60px;background:#3a3850;"></div>
<div style="position:absolute;left:624px;top:688.57px;font:38.33px 'Liberation Mono', monospace;line-height:43.43px;white-space:pre"><span style="color:#eeeeee">        </span><span style="color:#985a98">self</span><span style="color:#eeeeee">.</span><span style="color:#d8c57c">assertEqual</span><span style="color:#eeeeee">(v</span><span style="color:#d2aa66">+</span><span style="color:#c9673d">3</span><span style="color:#eeeeee">, </span><span style="color:#985a98">self</span><span style="color:#eeeeee">.o.var)</span></div>
<div style="position:absolute;left:624px;top:748.57px;font:38.33px 'Liberation Mono', monospace;line-height:43.43px;white-space:pre"><span style="color:#eeeeee">    </span><span style="color:#f0da8a">def </span><span style="color:#a57741">testMy4</span><span style="color:#eeeeee">(</span><span style="color:#985a98">self</span><span style="color:#eeeeee">)</span><span style="color:#d2aa66">:</span></div>
<svg style="position:absolute;left:715.0px;top:784px;" width="414" height="7" viewBox="0 0 414 7"><path d="M0,3 Q2.5,-1.8 5,3 Q7.5,7.8 10,3 Q12.5,-1.8 15,3 Q17.5,7.8 20,3 Q22.5,-1.8 25,3 Q27.5,7.8 30,3 Q32.5,-1.8 35,3 Q37.5,7.8 40,3 Q42.5,-1.8 45,3 Q47.5,7.8 50,3 Q52.5,-1.8 55,3 Q57.5,7.8 60,3 Q62.5,-1.8 65,3 Q67.5,7.8 70,3 Q72.5,-1.8 75,3 Q77.5,7.8 80,3 Q82.5,-1.8 85,3 Q87.5,7.8 90,3 Q92.5,-1.8 95,3 Q97.5,7.8 100,3 Q102.5,-1.8 105,3 Q107.5,7.8 110,3 Q112.5,-1.8 115,3 Q117.5,7.8 120,3 Q122.5,-1.8 125,3 Q127.5,7.8 130,3 Q132.5,-1.8 135,3 Q137.5,7.8 140,3 Q142.5,-1.8 145,3 Q147.5,7.8 150,3 Q152.5,-1.8 155,3 Q157.5,7.8 160,3 Q162.5,-1.8 165,3 Q167.5,7.8 170,3 Q172.5,-1.8 175,3 Q177.5,7.8 180,3 Q182.5,-1.8 185,3 Q187.5,7.8 190,3 Q192.5,-1.8 195,3 Q197.5,7.8 200,3 Q202.5,-1.8 205,3 Q207.5,7.8 210,3 Q212.5,-1.8 215,3 Q217.5,7.8 220,3 Q222.5,-1.8 225,3 Q227.5,7.8 230,3 Q232.5,-1.8 235,3 Q237.5,7.8 240,3 Q242.5,-1.8 245,3 Q247.5,7.8 250,3 Q252.5,-1.8 255,3 Q257.5,7.8 260,3 Q262.5,-1.8 265,3 Q267.5,7.8 270,3 Q272.5,-1.8 275,3 Q277.5,7.8 280,3 Q282.5,-1.8 285,3 Q287.5,7.8 290,3 Q292.5,-1.8 295,3 Q297.5,7.8 300,3 Q302.5,-1.8 305,3 Q307.5,7.8 310,3 Q312.5,-1.8 315,3 Q317.5,7.8 320,3 Q322.5,-1.8 325,3 Q327.5,7.8 330,3 Q332.5,-1.8 335,3 Q337.5,7.8 340,3 Q342.5,-1.8 345,3 Q347.5,7.8 350,3 Q352.5,-1.8 355,3 Q357.5,7.8 360,3 Q362.5,-1.8 365,3 Q367.5,7.8 370,3 Q372.5,-1.8 375,3 Q377.5,7.8 380,3 Q382.5,-1.8 385,3 Q387.5,7.8 390,3 Q392.5,-1.8 395,3 Q397.5,7.8 400,3 Q402.5,-1.8 405,3 Q407.5,7.8 410,3" fill="none" stroke="#3e3e3e" stroke-width="1.5"/></svg>
<div style="position:absolute;left:1061.0px;top:795px;width:69.0px;height:60px;background:#3a3850;"></div>
<div style="position:absolute;left:624px;top:808.57px;font:38.33px 'Liberation Mono', monospace;line-height:43.43px;white-space:pre"><span style="color:#eeeeee">        v </span><span style="color:#d2aa66">=</span><span style="color:#eeeeee"> </span><span style="color:#985a98">self</span><span style="color:#eeeeee">.o.var</span></div>
<div style="position:absolute;left:624px;top:868.57px;font:38.33px 'Liberation Mono', monospace;line-height:43.43px;white-space:pre"><span style="color:#eeeeee">        </span><span style="color:#985a98">self</span><span style="color:#eeeeee">.o.</span><span style="color:#d8c57c">my4</span><span style="color:#eeeeee">()</span></div>
<div style="position:absolute;left:1176.0px;top:915px;width:23.0px;height:60px;background:#3a6ca3;"></div>
<div style="position:absolute;left:1544.0px;top:915px;width:23.0px;height:60px;background:#3a6ca3;"></div>
<div style="position:absolute;left:1475.0px;top:915px;width:69.0px;height:60px;background:#3a3850;"></div>
<div style="position:absolute;left:624px;top:928.57px;font:38.33px 'Liberation Mono', monospace;line-height:43.43px;white-space:pre"><span style="color:#eeeeee">        </span><span style="color:#985a98">self</span><span style="color:#eeeeee">.</span><span style="color:#d8c57c">assertEqual</span><span style="color:#eeeeee">(v</span><span style="color:#d2aa66">+</span><span style="color:#c9673d">4</span><span style="color:#eeeeee">, </span><span style="color:#985a98">self</span><span style="color:#eeeeee">.o.var)</span></div>
<div style="position:absolute;left:474px;top:88.57px;font:38.33px 'Liberation Mono', monospace;line-height:43.43px;color:#f0f0f0;white-space:pre">22</div>
<div style="position:absolute;left:474px;top:148.57px;font:38.33px 'Liberation Mono', monospace;line-height:43.43px;color:#f0f0f0;white-space:pre">23</div>
<div style="position:absolute;left:474px;top:208.57px;font:38.33px 'Liberation Mono', monospace;line-height:43.43px;color:#f0f0f0;white-space:pre">24</div>
<div style="position:absolute;left:474px;top:268.57px;font:38.33px 'Liberation Mono', monospace;line-height:43.43px;color:#f0f0f0;white-space:pre">25</div>
<div style="position:absolute;left:474px;top:328.57px;font:38.33px 'Liberation Mono', monospace;line-height:43.43px;color:#f0f0f0;white-space:pre">26</div>
<div style="position:absolute;left:474px;top:388.57px;font:38.33px 'Liberation Mono', monospace;line-height:43.43px;color:#f0f0f0;white-space:pre">27</div>
<div style="position:absolute;left:474px;top:448.57px;font:38.33px 'Liberation Mono', monospace;line-height:43.43px;color:#f0f0f0;white-space:pre">28</div>
<div style="position:absolute;left:474px;top:508.57px;font:38.33px 'Liberation Mono', monospace;line-height:43.43px;color:#f0f0f0;white-space:pre">29</div>
<div style="position:absolute;left:474px;top:568.57px;font:38.33px 'Liberation Mono', monospace;line-height:43.43px;color:#f0f0f0;white-space:pre">30</div>
<div style="position:absolute;left:474px;top:628.57px;font:38.33px 'Liberation Mono', monospace;line-height:43.43px;color:#f0f0f0;white-space:pre">31</div>
<div style="position:absolute;left:474px;top:688.57px;font:38.33px 'Liberation Mono', monospace;line-height:43.43px;color:#f0f0f0;white-space:pre">32</div>
<div style="position:absolute;left:474px;top:748.57px;font:38.33px 'Liberation Mono', monospace;line-height:43.43px;color:#f0f0f0;white-space:pre">33</div>
<div style="position:absolute;left:474px;top:808.57px;font:38.33px 'Liberation Mono', monospace;line-height:43.43px;color:#f0f0f0;white-space:pre">34</div>
<div style="position:absolute;left:474px;top:868.57px;font:38.33px 'Liberation Mono', monospace;line-height:43.43px;color:#f0f0f0;white-space:pre">35</div>
<div style="position:absolute;left:474px;top:928.57px;font:38.33px 'Liberation Mono', monospace;line-height:43.43px;color:#a2a2a2;white-space:pre">36</div>
<div style="position:absolute;left:474px;top:988.57px;font:38.33px 'Liberation Mono', monospace;line-height:43.43px;color:#f0f0f0;white-space:pre">37</div>
<div style="position:absolute;left:607.8px;top:122px;width:2.2px;height:873px;background:#595959;"></div>
<svg style="position:absolute;left:596px;top:690px;" width="28" height="36" viewBox="0 0 28 36"><path d="M1.5,12.3 L14,1 L26.5,12.3 V32.2 H1.5 Z" fill="#141414" stroke="#5e5e5e" stroke-width="1.9"/><path d="M7.5,19.2 H20.5" stroke="#5e5e5e" stroke-width="1.9"/></svg>
<svg style="position:absolute;left:596px;top:755px;" width="28" height="36" viewBox="0 0 28 36"><path d="M1.5,1.2 H26.5 V20.9 L14,31.8 L1.5,20.9 Z" fill="#141414" stroke="#5e5e5e" stroke-width="1.9"/><path d="M7.5,14 H20.5" stroke="#5e5e5e" stroke-width="1.9"/></svg>
<svg style="position:absolute;left:596px;top:930px;" width="28" height="36" viewBox="0 0 28 36"><path d="M1.5,12.3 L14,1 L26.5,12.3 V32.2 H1.5 Z" fill="#141414" stroke="#5e5e5e" stroke-width="1.9"/><path d="M7.5,19.2 H20.5" stroke="#5e5e5e" stroke-width="1.9"/></svg>
<div style="position:absolute;left:708px;top:122px;width:2px;height:613px;background:#4c4c4c;"></div>
<div style="position:absolute;left:708px;top:796px;width:2px;height:179px;background:#4c4c4c;"></div>
<svg style="position:absolute;left:544px;top:748px;" width="23" height="32" viewBox="0 0 23 32"><path d="M0.2,0.2 L22,15.7 L0.2,31.2 Z" fill="#59a96a"/></svg>
<div style="position:absolute;left:451px;top:37px;width:471px;height:524px;background:#f2f2f2;box-sizing:border-box;border:1px solid #c8c8c8;border-top:none;box-shadow:1px 1px 2px rgba(0,0,0,0.15)"></div>
<div style="position:absolute;left:452px;top:168px;width:470px;height:31px;background:#2675bf;"></div>
<div style="position:absolute;left:452px;top:132px;width:470px;height:1.5px;background:#d2d2d2;"></div>
<div style="position:absolute;left:452px;top:263.5px;width:470px;height:1.5px;background:#d2d2d2;"></div>
<div style="position:absolute;left:452px;top:362.5px;width:470px;height:1.5px;background:#d2d2d2;"></div>
<div style="position:absolute;left:452px;top:461.5px;width:470px;height:1.5px;background:#d2d2d2;"></div>
<div style="position:absolute;left:489px;top:43.35px;font:normal 19.5px 'Liberation Sans', sans-serif;line-height:21.78px;color:#000;white-space:pre;">R<u>u</u>n '06'</div>
<div style="position:absolute;right:1138px;top:43.35px;font:19.5px 'Liberation Sans', sans-serif;line-height:21.78px;color:#4a4a4a;white-space:pre;text-align:right;">Shift+F10</div>
<svg style="position:absolute;left:462px;top:45px;" width="17" height="18" viewBox="0 0 17 18"><path d="M0.5,0 L16,9 L0.5,18 Z" fill="#59a869"/></svg>
<div style="position:absolute;left:489px;top:75.35px;font:normal 19.5px 'Liberation Sans', sans-serif;line-height:21.78px;color:#000;white-space:pre;"><u>D</u>ebug '06'</div>
<div style="position:absolute;right:1138px;top:75.35px;font:19.5px 'Liberation Sans', sans-serif;line-height:21.78px;color:#4a4a4a;white-space:pre;text-align:right;">Shift+F9</div>
<svg style="position:absolute;left:459px;top:73px;" width="20" height="23" viewBox="0 0 20 23"><g transform="translate(0,0.5)" fill="#59a869"><path d="M3.6,1 L7.2,4.6 M15.6,1 L12,4.6" stroke="#59a869" stroke-width="2.3"/><ellipse cx="9.6" cy="13" rx="6.4" ry="8.6"/><rect x="0.6" y="6.9" width="18.2" height="2.4"/><rect x="0.6" y="11.8" width="18.2" height="2.4"/><rect x="0.6" y="16.6" width="18.2" height="2.4"/><rect x="6.4" y="9.5" width="6.4" height="2.3" fill="#f2f2f2"/><rect x="6.4" y="14" width="6.4" height="2.3" fill="#f2f2f2"/></g></svg>
<div style="position:absolute;left:489px;top:106.35px;font:normal 19.5px 'Liberation Sans', sans-serif;line-height:21.78px;color:#8c8c8c;white-space:pre;">Run '06' with Co<u>v</u>erage</div>
<svg style="position:absolute;left:454px;top:102px;" width="30" height="30" viewBox="0 0 30 30"><path d="M4.5,6 Q12,4 19.3,6.6 V10.6 H16.3 V8.1 H12.1 V19.9 Q13.4,19.9 14.8,18 V20.8 Q13.6,22.2 12,22.8 Q6.5,20.5 4.5,15.5 Z" fill="#bdbdbd"/><path d="M16.3,13 L26.5,19.3 L16.3,25.6 Z" fill="#c2c2c2"/></svg>
<div style="position:absolute;left:489px;top:142.35px;font:normal 19.5px 'Liberation Sans', sans-serif;line-height:21.78px;color:#000;white-space:pre;">Run<span style="letter-spacing:-1.3px">...</span></div>
<div style="position:absolute;right:1138px;top:142.35px;font:19.5px 'Liberation Sans', sans-serif;line-height:21.78px;color:#4a4a4a;white-space:pre;text-align:right;">Alt+Shift+F10</div>
<svg style="position:absolute;left:462px;top:144px;" width="17" height="18" viewBox="0 0 17 18"><path d="M0.5,0 L16,9 L0.5,18 Z" fill="#59a869"/></svg>
<div style="position:absolute;left:489px;top:174.35px;font:normal 19.5px 'Liberation Sans', sans-serif;line-height:21.78px;color:#fff;white-space:pre;">Debug</div>
<div style="position:absolute;right:1138px;top:174.35px;font:19.5px 'Liberation Sans', sans-serif;line-height:21.78px;color:#fff;white-space:pre;text-align:right;">Alt+Shift+F9</div>
<svg style="position:absolute;left:459px;top:172px;" width="20" height="23" viewBox="0 0 20 23"><g transform="translate(0,0.5)" fill="#59a869"><path d="M3.6,1 L7.2,4.6 M15.6,1 L12,4.6" stroke="#59a869" stroke-width="2.3"/><ellipse cx="9.6" cy="13" rx="6.4" ry="8.6"/><rect x="0.6" y="6.9" width="18.2" height="2.4"/><rect x="0.6" y="11.8" width="18.2" height="2.4"/><rect x="0.6" y="16.6" width="18.2" height="2.4"/><rect x="6.4" y="9.5" width="6.4" height="2.3" fill="#2675bf"/><rect x="6.4" y="14" width="6.4" height="2.3" fill="#2675bf"/></g></svg>
<div style="position:absolute;left:489px;top:205.35px;font:normal 19.5px 'Liberation Sans', sans-serif;line-height:21.78px;color:#000;white-space:pre;">Attach to Process<span style="letter-spacing:-1.3px">...</span></div>
<div style="position:absolute;right:1138px;top:205.35px;font:19.5px 'Liberation Sans', sans-serif;line-height:21.78px;color:#4a4a4a;white-space:pre;text-align:right;">Ctrl+Alt+F5</div>
<svg style="position:absolute;left:459px;top:204px;" width="26" height="26" viewBox="0 0 26 26"><g transform="translate(1,0.6)" fill="#59a869"><path d="M3.6,1 L7.2,4.6 M15.6,1 L12,4.6" stroke="#59a869" stroke-width="2.3"/><ellipse cx="9.6" cy="13" rx="6.4" ry="8.6"/><rect x="0.6" y="6.9" width="18.2" height="2.4"/><rect x="0.6" y="11.8" width="18.2" height="2.4"/><rect x="0.6" y="16.6" width="18.2" height="2.4"/><rect x="6.4" y="9.5" width="6.4" height="2.3" fill="#f2f2f2"/><rect x="6.4" y="14" width="6.4" height="2.3" fill="#f2f2f2"/></g><path d="M10.6,10.4 H26 V26 H10.6 Z" fill="#f2f2f2"/><path d="M13.5,12.6 H22 V21.2 Z" fill="#6e6e6e"/><path d="M14.2,21.8 L19.6,16.4" stroke="#6e6e6e" stroke-width="2.8"/></svg>
<div style="position:absolute;left:489px;top:237.35px;font:normal 19.5px 'Liberation Sans', sans-serif;line-height:21.78px;color:#000;white-space:pre;">Edit Configu<u>r</u>ations<span style="letter-spacing:-1.3px">...</span></div>
<div style="position:absolute;left:489px;top:273.35px;font:normal 19.5px 'Liberation Sans', sans-serif;line-height:21.78px;color:#8c8c8c;white-space:pre;">Stop</div>
<div style="position:absolute;right:1138px;top:273.35px;font:19.5px 'Liberation Sans', sans-serif;line-height:21.78px;color:#8c8c8c;white-space:pre;text-align:right;">Ctrl+F2</div>
<svg style="position:absolute;left:461px;top:274px;" width="16" height="16" viewBox="0 0 16 16"><rect width="16" height="15.5" fill="#b9b9b9"/></svg>
<div style="position:absolute;left:489px;top:304.35px;font:normal 19.5px 'Liberation Sans', sans-serif;line-height:21.78px;color:#8c8c8c;white-space:pre;">Stop Background Processes<span style="letter-spacing:-1.3px">...</span></div>
<div style="position:absolute;right:1138px;top:304.35px;font:19.5px 'Liberation Sans', sans-serif;line-height:21.78px;color:#8c8c8c;white-space:pre;text-align:right;">Ctrl+Shift+F2</div>
<div style="position:absolute;left:489px;top:336.35px;font:normal 19.5px 'Liberation Sans', sans-serif;line-height:21.78px;color:#8c8c8c;white-space:pre;">Show Running List</div>
<div style="position:absolute;left:489px;top:372.35px;font:normal 19.5px 'Liberation Sans', sans-serif;line-height:21.78px;color:#000;white-space:pre;">Debugging Actions</div>
<svg style="position:absolute;left:902px;top:375px;" width="10" height="13" viewBox="0 0 10 13"><path d="M0,0 L9,6.2 L0,12.4 Z" fill="#6e6e6e"/></svg>
<div style="position:absolute;left:489px;top:403.35px;font:normal 19.5px 'Liberation Sans', sans-serif;line-height:21.78px;color:#000;white-space:pre;">Toggle Breakpoint</div>
<svg style="position:absolute;left:902px;top:406px;" width="10" height="13" viewBox="0 0 10 13"><path d="M0,0 L9,6.2 L0,12.4 Z" fill="#6e6e6e"/></svg>
<div style="position:absolute;left:489px;top:435.35px;font:normal 19.5px 'Liberation Sans', sans-serif;line-height:21.78px;color:#000;white-space:pre;">View Brea<u>k</u>points<span style="letter-spacing:-1.3px">...</span></div>
<div style="position:absolute;right:1138px;top:435.35px;font:19.5px 'Liberation Sans', sans-serif;line-height:21.78px;color:#4a4a4a;white-space:pre;text-align:right;">Ctrl+Shift+F8</div>
<svg style="position:absolute;left:459px;top:433px;" width="24" height="24" viewBox="0 0 24 24"><circle cx="14.6" cy="6.6" r="6.2" fill="#db5860"/><circle cx="7.9" cy="13.1" r="8" fill="#f2f2f2"/><circle cx="7.9" cy="13.1" r="7" fill="#db5860"/></svg>
<div style="position:absolute;left:489px;top:471.35px;font:normal 19.5px 'Liberation Sans', sans-serif;line-height:21.78px;color:#000;white-space:pre;">Test History</div>
<svg style="position:absolute;left:902px;top:474px;" width="10" height="13" viewBox="0 0 10 13"><path d="M0,0 L9,6.2 L0,12.4 Z" fill="#6e6e6e"/></svg>
<svg style="position:absolute;left:458px;top:468.7px;" width="22" height="22" viewBox="0 0 22 22"><circle cx="11" cy="11" r="9.2" fill="none" stroke="#6e6e6e" stroke-width="2.4"/><path d="M11,5.3 V11.4 L14.8,14.2" fill="none" stroke="#6e6e6e" stroke-width="2.3"/></svg>
<div style="position:absolute;left:489px;top:502.35px;font:normal 19.5px 'Liberation Sans', sans-serif;line-height:21.78px;color:#000;white-space:pre;">Import Tests from File<span style="letter-spacing:-1.3px">...</span></div>
<svg style="position:absolute;left:459px;top:503px;" width="20" height="20" viewBox="0 0 20 20"><path d="M2.5,2.9 V17.9 H16.1" fill="none" stroke="#6e6e6e" stroke-width="2.6"/><path d="M7,4.4 V12 H15.5 Z" fill="#6e6e6e"/><path d="M10.5,8.5 L18.3,0.7" stroke="#6e6e6e" stroke-width="2.6"/></svg>
<div style="position:absolute;left:489px;top:534.35px;font:normal 19.5px 'Liberation Sans', sans-serif;line-height:21.78px;color:#000;white-space:pre;">Show Code Co<u>v</u>erage Data</div>
<div style="position:absolute;right:1138px;top:534.35px;font:19.5px 'Liberation Sans', sans-serif;line-height:21.78px;color:#4a4a4a;white-space:pre;text-align:right;">Ctrl+Alt+F6</div>
<svg style="position:absolute;left:0px;top:0px;pointer-events:none" width="2042" height="995" viewBox="0 0 2042 995"><path d="M544.5,191 L560,183.5 L557.5,189.2 L1348,321.2 L1348,323 L556,197 L557,201.5 Z" fill="#ff1e1e"/></svg>
<div style="position:absolute;left:1284px;top:347.63px;font:normal 21.4px 'Liberation Sans', sans-serif;line-height:23.90px;color:#ff2020;white-space:pre;">选择直接运行, 而不是 pytest运行</div>
</body></html>
